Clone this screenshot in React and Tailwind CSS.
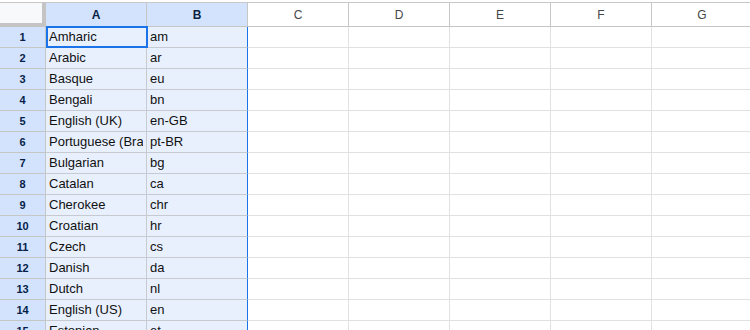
import React from 'react';

const rows = [
  ['Amharic', 'am'],
  ['Arabic', 'ar'],
  ['Basque', 'eu'],
  ['Bengali', 'bn'],
  ['English (UK)', 'en-GB'],
  ['Portuguese (Brazil)', 'pt-BR'],
  ['Bulgarian', 'bg'],
  ['Catalan', 'ca'],
  ['Cherokee', 'chr'],
  ['Croatian', 'hr'],
  ['Czech', 'cs'],
  ['Danish', 'da'],
  ['Dutch', 'nl'],
  ['English (US)', 'en'],
  ['Estonian', 'et'],
];

const emptyCols = ['C', 'D', 'E', 'F', 'G', 'H'];

export default function App() {
  return (
    <div className="w-[750px] h-[330px] overflow-hidden bg-white font-['Liberation_Sans',Arial,sans-serif] pt-[2px]">
      <div className="border-t border-[#c7c7c7] w-max">
        {/* header row */}
        <div className="flex h-[24px]">
          <div className="w-[46px] shrink-0 bg-[#c4c4c4] pr-[4px] pb-[4px]">
            <div className="w-full h-full bg-[#f8f9fa]" />
          </div>
          {['A', 'B'].map((c) => (
            <div
              key={c}
              className="w-[101px] shrink-0 bg-[#d3e3fd] border-r border-b border-[#c4c7c5] flex items-center justify-center text-[12px] font-bold text-[#0a1f44]"
            >
              {c}
            </div>
          ))}
          {emptyCols.map((c) => (
            <div
              key={c}
              className="w-[101px] shrink-0 border-r border-b border-[#c4c7c5] flex items-center justify-center text-[12px] text-[#444746]"
            >
              {c}
            </div>
          ))}
        </div>

        {rows.map(([name, code], i) => (
          <div key={i} className="flex h-[21px]">
            <div className="w-[46px] shrink-0 bg-[#d3e3fd] border-r border-b border-[#c4c7c5] flex items-center justify-center text-[11px] font-bold text-[#041e49]">
              {i + 1}
            </div>
            <div className="relative w-[101px] shrink-0 bg-[#e8f0fe] border-r border-b border-[#c7cbd1] text-[13px] text-[#111] px-[3px] leading-[20px]">
              <div className="whitespace-nowrap overflow-hidden">{name}</div>
              {i === 0 && (
                <div className="absolute left-0 top-[-1px] w-[102px] h-[22px] border-2 border-[#1a73e8]" />
              )}
            </div>
            <div className="w-[101px] shrink-0 bg-[#e8f0fe] border-r border-b border-r-[#1a73e8] border-b-[#c7cbd1] text-[13px] text-[#111] px-[3px] leading-[20px]">
              <div className="whitespace-nowrap overflow-hidden">{code}</div>
            </div>
            {emptyCols.map((c) => (
              <div key={c} className="w-[101px] shrink-0 border-r border-b border-[#e1e1e1]" />
            ))}
          </div>
        ))}
      </div>
    </div>
  );
}
